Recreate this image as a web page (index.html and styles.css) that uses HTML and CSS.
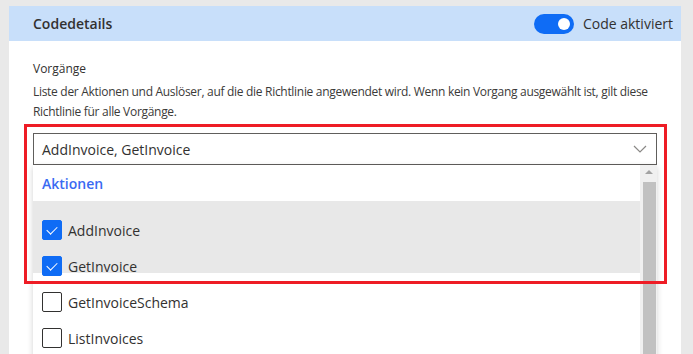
FILE: index.html
```html
<!DOCTYPE html>
<html lang="de">
<head>
    <meta charset="UTF-8">
    <title>Codedetails</title>
    <link rel="stylesheet" href="styles.css">
</head>
<body>
    <section class="panel">
        <header class="panel-head">
            <span class="panel-title">Codedetails</span>
            <label class="toggle">
                <span class="switch"><span class="knob"></span></span>
                Code aktiviert
            </label>
        </header>

        <div class="panel-body">
            <div class="field-label">Vorgänge</div>
            <p class="field-desc">Liste der Aktionen und Auslöser, auf die die Richtlinie angewendet wird. Wenn kein Vorgang ausgewählt ist, gilt diese Richtlinie für alle Vorgänge.</p>

            <div class="combo">
                <div class="combo-input">
                    <span>AddInvoice, GetInvoice</span>
                    <svg class="chevron" width="14" height="8" viewBox="0 0 14 8">
                        <path d="M1 1 L7 7 L13 1" fill="none" stroke="#8a8886" stroke-width="1.2"/>
                    </svg>
                </div>

                <div class="combo-list">
                    <div class="options">
                        <div class="group-head">Aktionen</div>
                        <div class="selected">
                            <div class="option"><span class="check on"></span>AddInvoice</div>
                            <div class="option"><span class="check on"></span>GetInvoice</div>
                        </div>
                        <div class="option"><span class="check"></span>GetInvoiceSchema</div>
                        <div class="option"><span class="check"></span>ListInvoices</div>
                    </div>
                    <div class="scrollbar">
                        <div class="arrow"></div>
                        <div class="thumb"></div>
                    </div>
                </div>

                <!-- Markierung -->
                <div class="highlight"></div>
            </div>
        </div>
    </section>
</body>
</html>
```

FILE: styles.css
```css
html, body {
    height: 354px;
    overflow: hidden;
}
body {
    margin: 0;
    padding: 6px 12px 0 9px;
    background: #e9e9e9;
    font-family: "Segoe UI", "Open Sans", "Noto Sans", sans-serif;
    color: #323130;
}
.panel {
    background: #fff;
    height: 400px;
}
.panel-head {
    height: 35px;
    background: #c8dffa;
    display: flex;
    align-items: center;
    justify-content: space-between;
    padding: 0 8px 0 24px;
}
.panel-title {
    font-size: 14px;
    font-weight: 600;
}
.toggle {
    display: flex;
    align-items: center;
    gap: 9px;
    font-size: 14px;
}
.switch {
    width: 40px;
    height: 20px;
    border-radius: 10px;
    background: #0f6cf5;
    display: flex;
    align-items: center;
    justify-content: flex-end;
    padding: 0 4px;
    box-sizing: border-box;
}
.knob {
    width: 12px;
    height: 12px;
    border-radius: 50%;
    background: #fff;
}
.panel-body {
    padding: 18px 24px 0 24px;
}
.field-label {
    font-size: 12px;
    line-height: 20px;
}
.field-desc {
    margin: 3px 0 11px;
    font-size: 12px;
    line-height: 20px;
    letter-spacing: -0.3px;
    color: #3b3a39;
}
.combo {
    position: relative;
}
.combo-input {
    height: 32px;
    box-sizing: border-box;
    border: 1px solid #605e5c;
    display: flex;
    align-items: center;
    justify-content: space-between;
    padding: 0 8px 0 8px;
    font-size: 14px;
}
.chevron {
    margin-right: 1px;
}
.combo-list {
    display: flex;
    background: #fff;
    box-shadow: 0 2px 6px rgba(0,0,0,0.18);
    height: 200px;
}
.options {
    flex: 1;
}
.group-head {
    height: 36px;
    display: flex;
    align-items: center;
    padding-left: 9px;
    font-size: 14px;
    font-weight: 600;
    color: #3a6af2;
}
.selected {
    background: #e8e8e8;
    height: 61px;
    padding-top: 11px;
    margin-bottom: 11px;
}
.option {
    height: 36px;
    display: flex;
    align-items: center;
    gap: 6px;
    padding-left: 9px;
    font-size: 14px;
}
.check {
    width: 20px;
    height: 20px;
    box-sizing: border-box;
    border: 1px solid #323130;
    border-radius: 2px;
    position: relative;
}
.check.on {
    background: #0f6cf5;
    border-color: #0f6cf5;
}
.check.on::after {
    content: "";
    position: absolute;
    left: 6px;
    top: 3px;
    width: 5px;
    height: 9px;
    border: solid #fff;
    border-width: 0 1.3px 1.3px 0;
    transform: rotate(45deg);
}
.scrollbar {
    width: 17px;
    background: #f0f0f0;
    display: flex;
    flex-direction: column;
    align-items: center;
    padding-top: 5px;
    box-sizing: border-box;
}
.arrow {
    width: 0;
    height: 0;
    border-left: 4px solid transparent;
    border-right: 4px solid transparent;
    border-bottom: 4px solid #a3a3a3;
    margin-bottom: 8px;
}
.thumb {
    width: 13px;
    flex: 1;
    background: #c1c1c1;
    margin-left: 2px;
}
.highlight {
    position: absolute;
    left: -9px;
    top: -9px;
    right: -10px;
    height: 160px;
    box-sizing: border-box;
    border: 3px solid #ee1c25;
}
```
